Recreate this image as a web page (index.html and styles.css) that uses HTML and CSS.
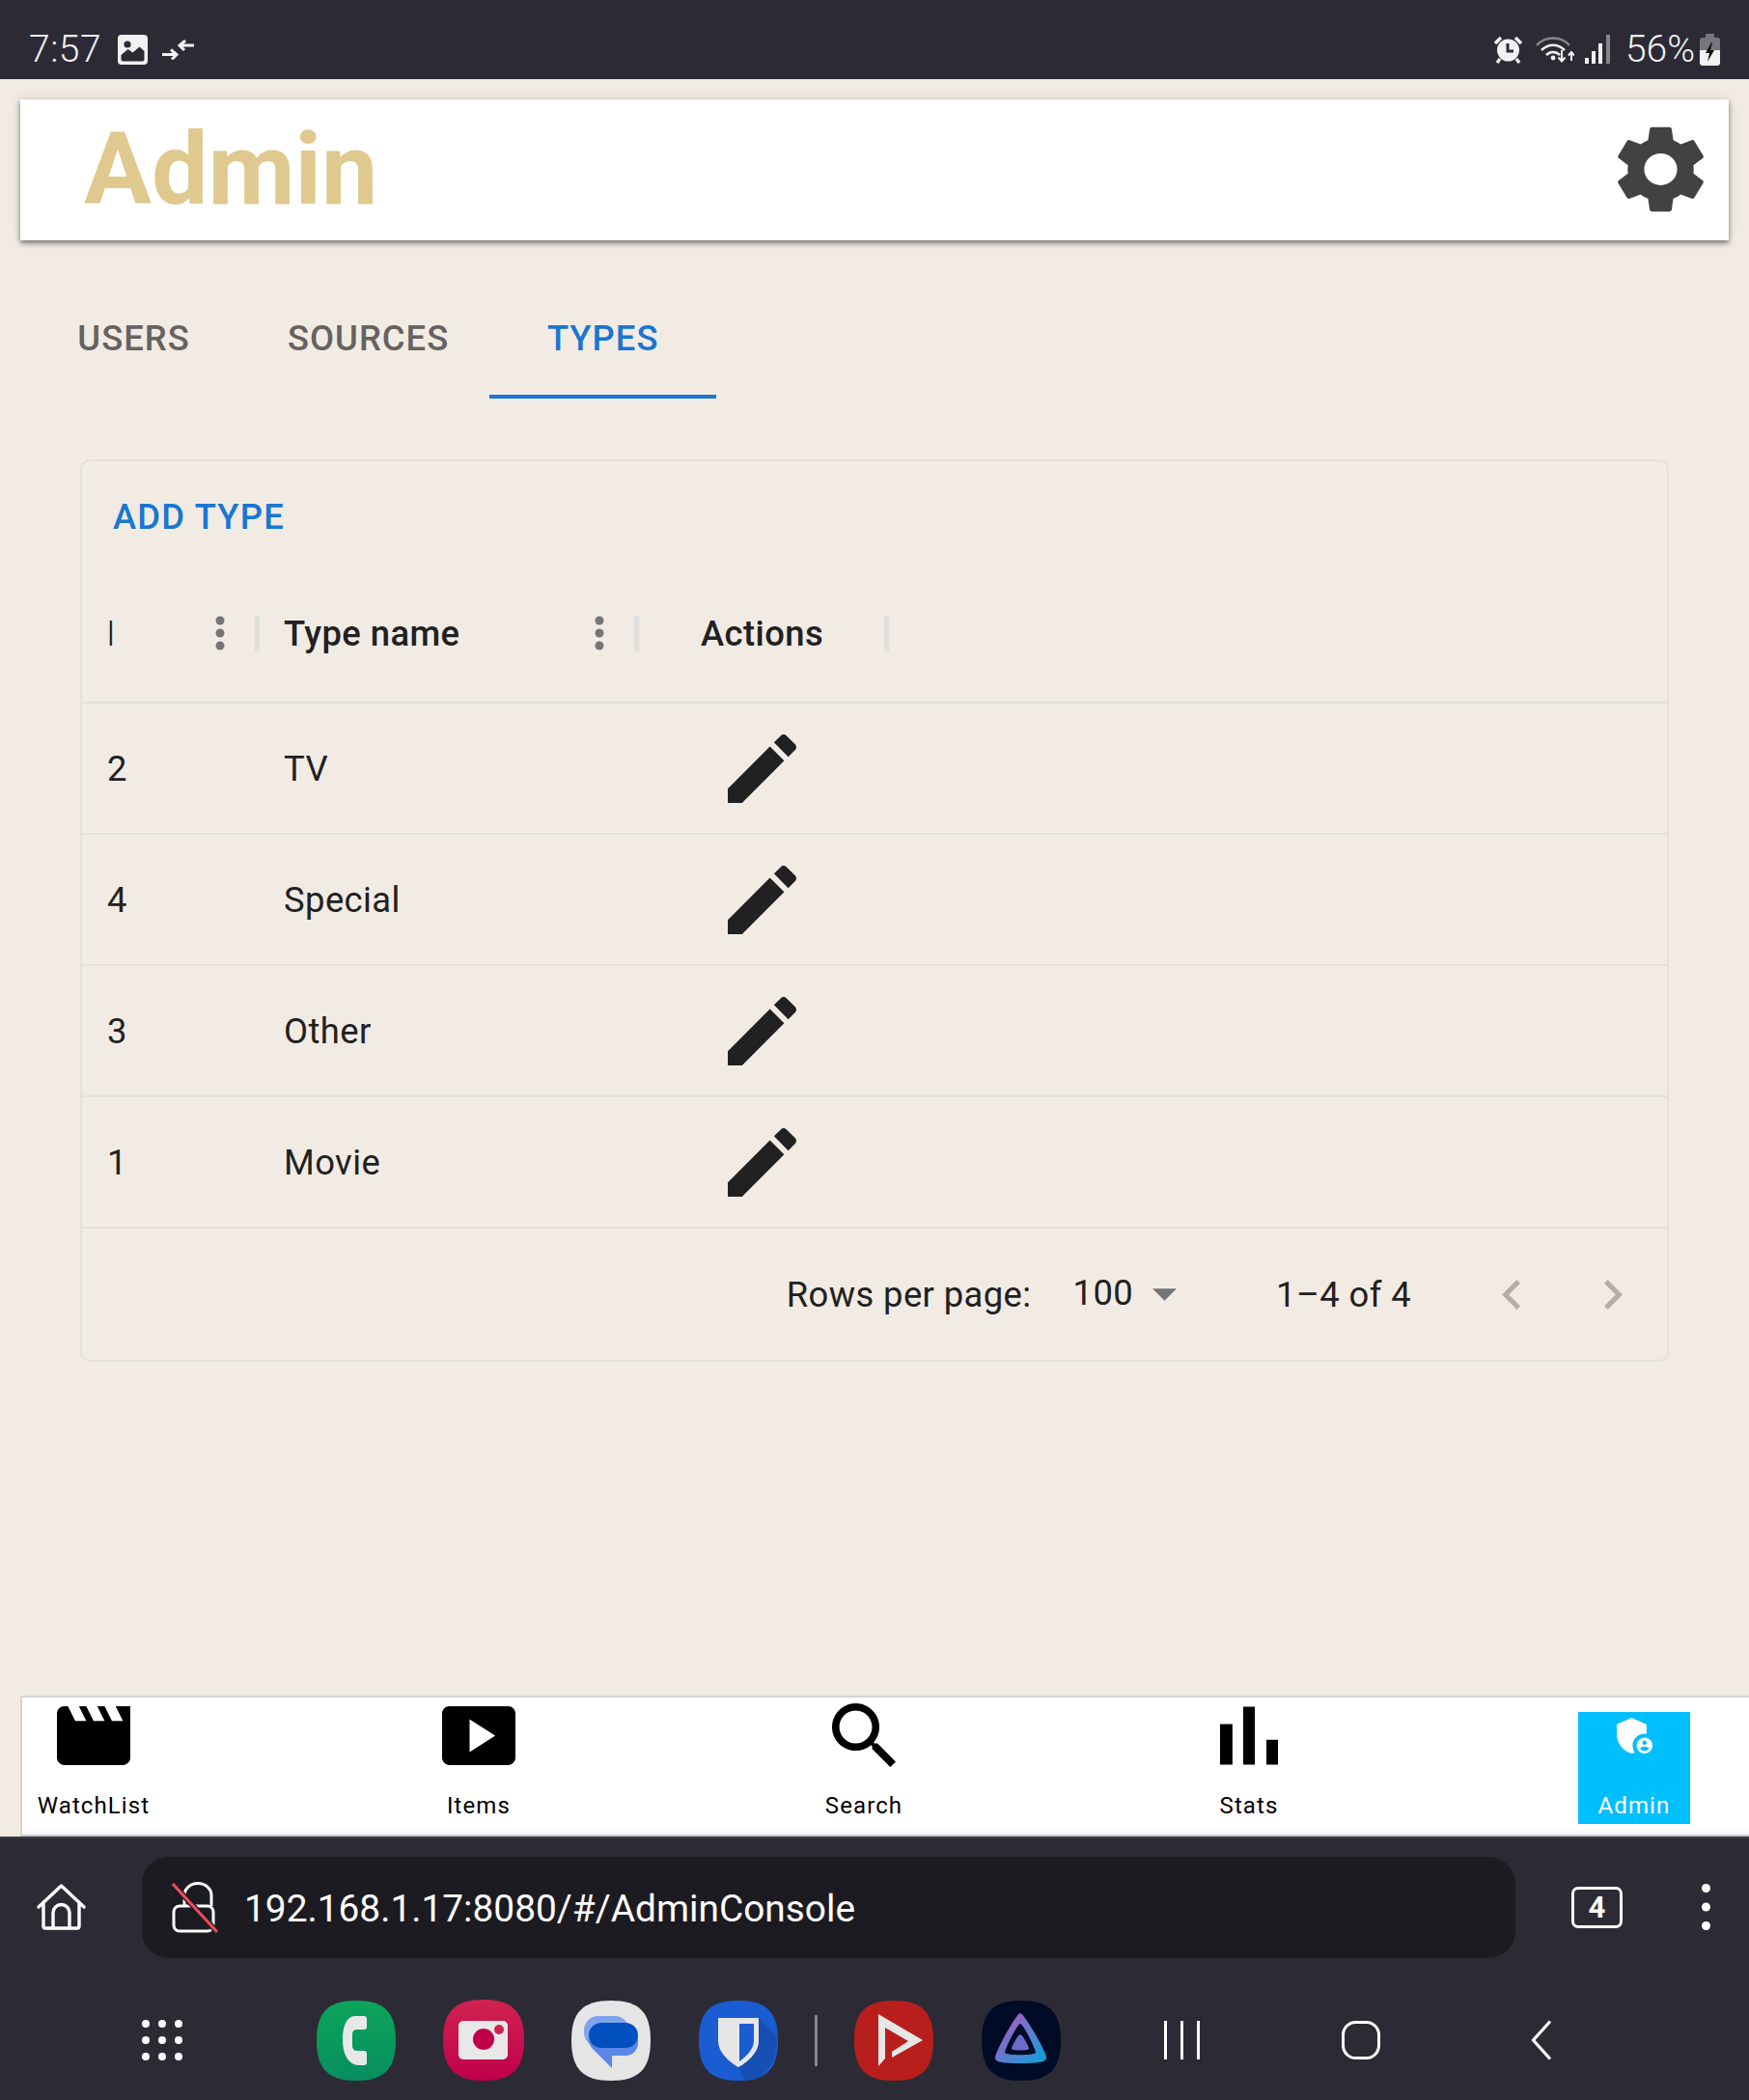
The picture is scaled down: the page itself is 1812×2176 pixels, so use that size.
FILE: index.html
```html
<!DOCTYPE html>
<html lang="en">
<head>
  <meta charset="UTF-8">
  <meta name="viewport" content="width=device-width, initial-scale=1.0">
  <title>Admin</title>
  <link rel="stylesheet" href="styles.css">
</head>
<body>
  <div class="status-bar">
    <span class="status-time">7:57</span>
    <svg class="st-image" viewBox="0 0 31 31"><rect width="31" height="31" rx="4" fill="#f1f1f1"/><circle cx="10" cy="10" r="3.6" fill="#2c2b35"/><path d="M3.5 21l7-6 5 3.5 7-6 5 4.5v8.5a2 2 0 0 1-2 2h-20a2 2 0 0 1-2-2z" fill="#2c2b35"/></svg>
    <svg class="st-arrows" viewBox="0 0 33 21"><path d="M0 15.5h14M9 10.5l6 5-5 5M33 6H19M24 1l-6 5 5 5" fill="none" stroke="#f1f1f1" stroke-width="3"/></svg>
    <svg class="st-alarm" viewBox="0 0 29 29"><circle cx="14.5" cy="15" r="11.5" fill="#f1f1f1"/><path d="M14 8v8h6" fill="none" stroke="#2c2b35" stroke-width="3"/><path d="M1 8l6-6M28 8l-6-6M6 24l-3 4M23 24l3 4" stroke="#f1f1f1" stroke-width="3.4"/></svg>
    <svg class="st-wifi" viewBox="0 0 40 30"><path d="M1 11C10 1 26 1 35 11" fill="none" stroke="#85848b" stroke-width="2.6"/><path d="M6 16C13 9 23 9 30 16M11 21c4-4 10-4 14 0" fill="none" stroke="#f1f1f1" stroke-width="2.6"/><circle cx="18" cy="24" r="2.4" fill="#f1f1f1"/><path d="M27 16v11M23.500 23.500l3.500 4 3.500-4M37 27v-9M33.800 21.500l3.200-3.500 3 3.500" fill="none" stroke="#f1f1f1" stroke-width="2"/></svg>
    <svg class="st-signal" viewBox="0 0 27 30"><rect x="0" y="24" width="4" height="6" fill="#f1f1f1"/><rect x="7" y="17" width="4" height="13" fill="#f1f1f1"/><rect x="14" y="9" width="4" height="21" fill="#f1f1f1"/><rect x="22" y="0" width="4" height="30" fill="#85848b"/></svg>
    <span class="status-battery">56%</span>
    <svg class="st-battery" viewBox="0 0 21 33"><path d="M6 0h9v4h3a3 3 0 0 1 3 3v10H0V7a3 3 0 0 1 3-3h3z" fill="#77767d"/><path d="M0 17h21v13a3 3 0 0 1-3 3H3a3 3 0 0 1-3-3z" fill="#f1f1f1"/><path d="M12 9l-6 11h4l-2 9 7-12h-4l2-8z" fill="#111"/></svg>
  </div>

  <div class="page">
    <div class="app-header">
      <h1 class="app-title">Admin</h1>
      <svg class="settings-icon" viewBox="2 2 20 20" preserveAspectRatio="none"><path d="M19.14 12.94c.04-.3.06-.61.06-.94 0-.32-.02-.64-.07-.94l2.03-1.58c.18-.14.23-.41.12-.61l-1.92-3.32c-.12-.22-.37-.29-.59-.22l-2.39.96c-.5-.38-1.03-.7-1.62-.94l-.36-2.54c-.04-.24-.24-.41-.48-.41h-3.84c-.24 0-.43.17-.47.41l-.36 2.54c-.59.24-1.13.57-1.62.94l-2.39-.96c-.22-.08-.47 0-.59.22L2.74 8.87c-.12.21-.08.47.12.61l2.03 1.58c-.05.3-.09.63-.09.94s.02.64.07.94l-2.03 1.58c-.18.14-.23.41-.12.61l1.92 3.32c.12.22.37.29.59.22l2.39-.96c.5.38 1.03.7 1.62.94l.36 2.54c.05.24.24.41.48.41h3.84c.24 0 .44-.17.47-.41l.36-2.54c.59-.24 1.13-.56 1.62-.94l2.39.96c.22.08.47 0 .59-.22l1.92-3.32c.12-.22.07-.47-.12-.61l-2.01-1.58zM12 15.6c-1.98 0-3.6-1.62-3.6-3.6s1.62-3.6 3.6-3.6 3.6 1.62 3.6 3.6-1.62 3.6-3.6 3.6z"/></svg>
    </div>

    <div class="tabs">
      <div class="tab">USERS</div>
      <div class="tab">SOURCES</div>
      <div class="tab tab-active">TYPES</div>
    </div>

    <div class="card">
      <div class="toolbar"><span class="add-btn">ADD TYPE</span></div>

      <div class="grid-row grid-head">
        <div class="cell head-cell">
          <span class="head-id">I</span>
          <svg class="kebab" viewBox="0 0 10 36"><circle cx="5" cy="5" r="4.500"/><circle cx="5" cy="18" r="4.500"/><circle cx="5" cy="31" r="4.500"/></svg>
          <span class="col-sep"></span>
        </div>
        <div class="cell head-cell">
          <span class="head-label">Type name</span>
          <svg class="kebab" viewBox="0 0 10 36"><circle cx="5" cy="5" r="4.500"/><circle cx="5" cy="18" r="4.500"/><circle cx="5" cy="31" r="4.500"/></svg>
          <span class="col-sep"></span>
        </div>
        <div class="cell head-cell head-actions">
          <span class="head-label">Actions</span>
          <span class="col-sep"></span>
        </div>
      </div>

      <div class="grid-row">
        <div class="cell cell-id">2</div>
        <div class="cell cell-name">TV</div>
        <div class="cell cell-action"><svg class="edit-icon" viewBox="3 3 18 18"><path d="M3 17.25V21h3.750L17.810 9.940l-3.750-3.750L3 17.250zM20.710 7.040c.39-.39.39-1.020 0-1.410l-2.340-2.340c-.39-.39-1.020-.39-1.410 0l-1.830 1.830 3.750 3.750 1.830-1.830z"/></svg></div>
      </div>
      <div class="grid-row">
        <div class="cell cell-id">4</div>
        <div class="cell cell-name">Special</div>
        <div class="cell cell-action"><svg class="edit-icon" viewBox="3 3 18 18"><path d="M3 17.25V21h3.750L17.810 9.940l-3.750-3.750L3 17.250zM20.710 7.040c.39-.39.39-1.020 0-1.410l-2.340-2.340c-.39-.39-1.020-.39-1.410 0l-1.830 1.830 3.750 3.750 1.830-1.830z"/></svg></div>
      </div>
      <div class="grid-row">
        <div class="cell cell-id">3</div>
        <div class="cell cell-name">Other</div>
        <div class="cell cell-action"><svg class="edit-icon" viewBox="3 3 18 18"><path d="M3 17.25V21h3.750L17.810 9.940l-3.750-3.750L3 17.250zM20.710 7.040c.39-.39.39-1.020 0-1.410l-2.340-2.340c-.39-.39-1.020-.39-1.410 0l-1.830 1.830 3.750 3.750 1.830-1.830z"/></svg></div>
      </div>
      <div class="grid-row">
        <div class="cell cell-id">1</div>
        <div class="cell cell-name">Movie</div>
        <div class="cell cell-action"><svg class="edit-icon" viewBox="3 3 18 18"><path d="M3 17.25V21h3.750L17.810 9.940l-3.750-3.750L3 17.250zM20.710 7.040c.39-.39.39-1.020 0-1.410l-2.340-2.340c-.39-.39-1.020-.39-1.410 0l-1.830 1.830 3.750 3.750 1.830-1.830z"/></svg></div>
      </div>

      <div class="pagination">
        <span>Rows per page:</span>
        <span class="page-size">100</span>
        <svg class="size-arrow" viewBox="7 10 10 5"><path d="M7 10l5 5 5-5z"/></svg>
        <span class="page-range">1–4 of 4</span>
        <svg class="page-prev" viewBox="8 6 7.410 12"><path d="M15.410 7.410 14 6l-6 6 6 6 1.410-1.410L10.830 12z"/></svg>
        <svg class="page-next" viewBox="8.590 6 7.410 12"><path d="M10 6 8.590 7.410 13.170 12l-4.580 4.590L10 18l6-6z"/></svg>
      </div>
    </div>
  </div>

  <div class="bottom-nav">
    <div class="nav-item">
      <svg class="nav-icon" width="76" height="61" viewBox="2 4 20 16"><path d="M18 4l2 4h-3l-2-4h-2l2 4h-3l-2-4H8l2 4H7L5 4H4c-1.100 0-1.990.9-1.990 2L2 18c0 1.100.9 2 2 2h16c1.100 0 2-.9 2-2V4h-4z"/></svg>
      <span class="nav-label">WatchList</span>
    </div>
    <div class="nav-item">
      <svg class="nav-icon" width="76" height="61" viewBox="2 4 20 16"><path d="M20 4H4c-1.100 0-2 .9-2 2v12c0 1.100.9 2 2 2h16c1.100 0 2-.9 2-2V6c0-1.100-.9-2-2-2zM9.500 16.500v-9l7 4.500-7 4.500z"/></svg>
      <span class="nav-label">Items</span>
    </div>
    <div class="nav-item nav-search">
      <svg class="nav-icon" width="66" height="66" viewBox="3 3 17.490 17.490"><path d="M15.500 14h-.79l-.28-.27C15.410 12.590 16 11.110 16 9.500 16 5.910 13.090 3 9.500 3S3 5.910 3 9.500 5.910 16 9.500 16c1.610 0 3.090-.59 4.230-1.570l.27.28v.79l5 4.990L20.490 19l-4.990-5zm-6 0C7.010 14 5 11.990 5 9.500S7.010 5 9.500 5 14 7.010 14 9.500 11.990 14 9.500 14z"/></svg>
      <span class="nav-label">Search</span>
    </div>
    <div class="nav-item">
      <svg class="nav-icon" width="60" height="61" viewBox="5 5 14 14"><path d="M5 9.200h3V19H5zM10.600 5h2.800v14h-2.800zm5.600 8H19v6h-2.800z"/></svg>
      <span class="nav-label">Stats</span>
    </div>
    <div class="nav-item nav-active">
      <svg class="nav-shield" width="39" height="37" viewBox="3 3 18 18"><path d="M17 11c.34 0 .67.04 1 .09V6.270L10.500 3 3 6.270v4.910c0 4.540 3.200 8.790 7.500 9.820.55-.13 1.080-.32 1.600-.55-.69-.98-1.100-2.170-1.100-3.450 0-3.310 2.690-6 6-6z"/><path d="M17 13c-2.210 0-4 1.790-4 4s1.790 4 4 4 4-1.790 4-4-1.790-4-4-4zm0 1.380c.62 0 1.120.51 1.120 1.120s-.51 1.120-1.120 1.120-1.120-.51-1.120-1.120.5-1.120 1.120-1.120zm0 5.370c-.93 0-1.740-.46-2.240-1.170.05-.72 1.510-1.080 2.240-1.080s2.190.36 2.240 1.080c-.5.71-1.310 1.170-2.240 1.170z"/></svg>
      <span class="nav-label">Admin</span>
    </div>
  </div>

  <div class="browser-bar">
    <div class="url-row">
      <svg class="home-icon" viewBox="0 0 51 48"><path d="M2 24L25.500 2 49 24M7 20v24a2 2 0 0 0 2 2h33a2 2 0 0 0 2-2V20M17 46V30a8.500 8.500 0 0 1 17 0v16" fill="none" stroke="#fff" stroke-width="3.400" stroke-linejoin="round" stroke-linecap="round"/></svg>
      <div class="url-box">
        <svg class="lock-icon" viewBox="0 0 48 53"><rect x="2" y="25" width="41" height="26" rx="6" fill="none" stroke="#fff" stroke-width="3"/><path d="M13 25V14a14 12.500 0 0 1 28 0v11" fill="none" stroke="#fff" stroke-width="3"/><path d="M1 2l46 50" stroke="#1c1b21" stroke-width="6"/><path d="M1 2l46 50" stroke="#ef4a5a" stroke-width="3"/></svg>
        <span class="url-text">192.168.1.17:8080/#/AdminConsole</span>
      </div>
      <div class="tab-count">4</div>
      <svg class="menu-icon" viewBox="0 0 9 48"><circle cx="4.500" cy="4.500" r="4.500"/><circle cx="4.500" cy="24" r="4.500"/><circle cx="4.500" cy="43.500" r="4.500"/></svg>
    </div>

    <div class="dock-row">
      <svg class="apps-icon" viewBox="0 0 42 42"><circle cx="4" cy="4" r="4"/><circle cx="21" cy="4" r="4"/><circle cx="38" cy="4" r="4"/><circle cx="4" cy="21" r="4"/><circle cx="21" cy="21" r="4"/><circle cx="38" cy="21" r="4"/><circle cx="4" cy="38" r="4"/><circle cx="21" cy="38" r="4"/><circle cx="38" cy="38" r="4"/></svg>

      <svg class="app-icon app-phone" viewBox="0 0 82 83">
        <defs><linearGradient id="green" x1="0" y1="0" x2="0" y2="1"><stop offset="0" stop-color="#0ca45a"/><stop offset="1" stop-color="#078e60"/></linearGradient></defs>
        <path d="M41 0C70 0 82 12 82 41 82 71 70 83 41 83 12 83 0 71 0 41 0 12 12 0 41 0z" fill="url(#green)"/>
        <path d="M40 16H49Q52 16 52 19V27Q52 30 49 30H42Q37 30 37 35V47Q37 52 42 52H49Q52 52 52 55V64Q52 67 49 67H44C33 67 27 55 27 41 27 27 31 16 40 16z" fill="#e8e8e8"/>
      </svg>
      <svg class="app-icon app-camera" viewBox="0 0 84 84">
        <defs><linearGradient id="pink" x1="0" y1="0" x2="0" y2="1"><stop offset="0" stop-color="#d0234f"/><stop offset="1" stop-color="#bf004b"/></linearGradient></defs>
        <path d="M42 0C71 0 84 12 84 42 84 72 71 84 42 84 13 84 0 72 0 42 0 12 13 0 42 0z" fill="url(#pink)"/>
        <rect x="16" y="22" width="51" height="40" rx="5" fill="#e8e8e8"/>
        <circle cx="42" cy="41" r="11" fill="#bf004b"/>
        <circle cx="58" cy="31" r="5" fill="#d0234f"/>
      </svg>
      <svg class="app-icon app-messages" viewBox="0 0 82 83">
        <path d="M41 0C70 0 82 12 82 41 82 71 70 83 41 83 12 83 0 71 0 41 0 12 12 0 41 0z" fill="#e5e5e5"/>
        <rect x="13" y="16" width="47" height="32" rx="15" fill="#7fa3ee"/>
        <path d="M18 40H69V44A13 13 0 0 1 56 57H42V70L22 50A14 14 0 0 1 18 40z" fill="#5a86e6"/>
        <rect x="18" y="23" width="51" height="26" rx="13" fill="#0050bf"/>
      </svg>
      <svg class="app-icon app-bitwarden" viewBox="0 0 82 83">
        <path d="M41 0C70 0 82 12 82 41 82 71 70 83 41 83 12 83 0 71 0 41 0 12 12 0 41 0z" fill="#1a5dd2"/>
        <path d="M62 18L81 37C82 60 72 82 48 83L41 69 62 42z" fill="#1750b5"/>
        <path d="M20 18H62V42C62 54 50 64 41 69 32 64 20 54 20 42z" fill="#e6e6e6"/>
        <path d="M42 24H57V42C57 50 49 58 42 63z" fill="#1a5dd2"/>
      </svg>
      <span class="dock-divider"></span>
      <svg class="app-icon app-newpipe" viewBox="0 0 82 83">
        <path d="M41 0C70 0 82 12 82 41 82 71 70 83 41 83 12 83 0 71 0 41 0 12 12 0 41 0z" fill="#b81f1c"/>
        <path d="M25 14L71 41 39 59V53L56 42 32 28V60L25 68z" fill="#e6e6e6"/>
      </svg>
      <svg class="app-icon app-jellyfin" viewBox="0 0 82 83">
        <defs><linearGradient id="jelly" x1="0.2" y1="0.15" x2="0.95" y2="0.9"><stop offset="0" stop-color="#a25cc6"/><stop offset="1" stop-color="#10a0d8"/></linearGradient></defs>
        <path d="M41 0C70 0 82 12 82 41 82 71 70 83 41 83 12 83 0 71 0 41 0 12 12 0 41 0z" fill="#020b26"/>
        <path d="M40 13C44 13 65 50 67 58 68 63 62 65 40 65 18 65 13 63 14 58 16 50 36 13 40 13z" fill="url(#jelly)"/>
        <path d="M40 24C43 24 56 50 56 54 55 57 25 57 24 54 24 50 37 24 40 24z" fill="#020b26"/>
        <path d="M40 35C42 35 49 47 49 50 48 52 32 52 31 50 31 47 38 35 40 35z" fill="#6a6ccc"/>
      </svg>

      <svg class="sys-recents" viewBox="0 0 37 40"><path d="M1.500 0v40M18.500 0v40M35.500 0v40" stroke="#fff" stroke-width="3"/></svg>
      <svg class="sys-home" viewBox="0 0 40 40"><rect x="1.500" y="1.500" width="37" height="37" rx="13" fill="none" stroke="#fff" stroke-width="3"/></svg>
      <svg class="sys-back" viewBox="0 0 22 42"><path d="M20 1.500L2.500 21 20 40.500" fill="none" stroke="#fff" stroke-width="3.200"/></svg>
    </div>
  </div>
</body>
</html>
```

FILE: styles.css
```css
:root {
  --bg-page: #f2ebe4;
  --bg-dark: #2c2b35;
  --bg-url: #1c1b21;
  --line: #e2e1dc;
  --text: #212121;
  --blue: #1976d2;
}

* {
  box-sizing: border-box;
}

body {
  margin: 0;
  width: 1812px;
  height: 2176px;
  display: flex;
  flex-direction: column;
  overflow: hidden;
  font-family: Roboto, 'Liberation Sans', sans-serif;
  color: var(--text);
  background-color: var(--bg-page);
}

svg {
  display: block;
  flex: none;
}

/* phone status bar */
.status-bar {
  height: 82px;
  padding: 20px 30px 0 30px;
  display: flex;
  align-items: center;
  background-color: var(--bg-dark);
  color: #f1f1f1;
}

.status-time {
  font-size: 39px;
  font-weight: 300;
  line-height: 1;
  letter-spacing: 0.5px;
}

.st-image {
  width: 31px;
  height: 31px;
  margin-left: 17px;
}

.st-arrows {
  width: 33px;
  height: 21px;
  margin-left: 15px;
}

.st-alarm {
  width: 29px;
  height: 29px;
  margin-left: auto;
}

.st-wifi {
  width: 40px;
  height: 30px;
  margin-left: 14px;
}

.st-signal {
  width: 27px;
  height: 30px;
  margin-left: 11px;
}

.status-battery {
  margin-left: 15px;
  font-size: 39px;
  font-weight: 300;
  line-height: 1;
}

.st-battery {
  width: 21px;
  height: 33px;
  margin-left: 5px;
}

/* page */
.page {
  flex: 1;
  padding: 21px 21px 0 21px;
}

.app-header {
  height: 146px;
  padding: 0 23px 0 66px;
  display: flex;
  align-items: center;
  justify-content: space-between;
  background-color: white;
  box-shadow: 0 3px 5px rgba(0, 0, 0, 0.45), 0 0 12px rgba(0, 0, 0, 0.12);
}

.app-title {
  margin: 0;
  font-size: 104px;
  font-weight: 700;
  line-height: 1;
  color: #dfc98e;
}

.settings-icon {
  width: 95px;
  height: 91px;
  margin-bottom: 2px;
  fill: #424242;
}

.tabs {
  display: flex;
  margin-top: 39px;
}

.tab {
  min-width: 235px;
  height: 125px;
  padding: 0 42px;
  display: flex;
  align-items: center;
  justify-content: center;
  font-size: 36.4px;
  font-weight: 500;
  letter-spacing: 1px;
  color: #666260;
  border-bottom: 4px solid transparent;
  border-top: 4px solid transparent;
}

.tab-active {
  color: var(--blue);
  border-bottom-color: var(--blue);
}

/* data grid card */
.card {
  margin: 63px 62px 0 62px;
  height: 935px;
  border: 2px solid var(--line);
  border-radius: 10px;
}

.toolbar {
  height: 114px;
  padding: 0 0 0 32px;
  display: flex;
  align-items: center;
}

.add-btn {
  font-size: 36.4px;
  font-weight: 500;
  letter-spacing: 1.2px;
  color: var(--blue);
}

.grid-row {
  height: 136px;
  display: grid;
  grid-template-columns: 184px 393px 259px;
  border-bottom: 2px solid var(--line);
  font-size: 36.4px;
  letter-spacing: 0.42px;
}

.grid-head {
  height: 137px;
  padding-bottom: 7px;
  font-weight: 500;
}

.cell {
  display: flex;
  align-items: center;
}

.cell-id {
  padding-left: 26px;
}

.cell-name {
  padding-left: 25px;
}

.cell-action {
  justify-content: center;
  padding-right: 4px;
}

.edit-icon {
  width: 71px;
  height: 71px;
  fill: #212121;
}

.head-cell {
  padding-left: 25px;
}

.head-id {
  font-weight: 300;
}

.head-actions {
  padding-left: 64px;
}

.kebab {
  width: 10px;
  height: 36px;
  margin-left: auto;
  fill: #757575;
}

.col-sep {
  width: 5px;
  height: 37px;
  margin-left: 31px;
  background-color: #e0dfdb;
}

.head-actions .col-sep {
  margin-left: auto;
}

.pagination {
  height: 136px;
  padding-right: 46px;
  display: flex;
  align-items: center;
  justify-content: flex-end;
  font-size: 36.4px;
  letter-spacing: 0.4px;
}

.page-size {
  margin-left: 43px;
  margin-bottom: 4px;
}

.size-arrow {
  width: 25px;
  height: 13px;
  margin-left: 20px;
  fill: #757575;
}

.page-range {
  margin-left: 103px;
}

.page-prev,
.page-next {
  width: 19px;
  height: 31px;
  fill: rgba(0, 0, 0, 0.26);
}

.page-prev {
  margin-left: 94px;
}

.page-next {
  margin-left: 87px;
}

/* app bottom navigation */
.bottom-nav {
  height: 146px;
  margin-left: 21px;
  padding-left: 16px;
  display: flex;
  align-items: flex-start;
  gap: 283px;
  background: linear-gradient(#fff 92%, #f8f8f8);
  border-top: 2px solid #d4d4d2;
  border-left: 2px solid #d4d4d2;
  border-bottom: 2px solid #c8c8c8;
  color: black;
}

.nav-item {
  flex: none;
  width: 116px;
  height: 125px;
  padding-top: 9px;
  display: flex;
  flex-direction: column;
  align-items: center;
}

.nav-icon {
  fill: black;
}

.nav-search {
  padding-top: 6px;
}

.nav-label {
  margin-top: 28px;
  font-size: 24px;
  line-height: 28px;
  letter-spacing: 1.1px;
  white-space: nowrap;
}

.nav-search .nav-label {
  margin-top: 26px;
}

.nav-active {
  height: 116px;
  margin-top: 15px;
  padding-top: 6px;
  background-color: #00bfff;
  color: white;
}

.nav-shield {
  fill: white;
}

.nav-active .nav-label {
  margin-top: 40px;
}

/* browser toolbar and launcher */
.browser-bar {
  height: 273px;
  background-color: var(--bg-dark);
  border-top: 2px solid #3a3a42;
}

.url-row {
  height: 166px;
  padding: 0 0 24px 38px;
  display: flex;
  align-items: center;
}

.home-icon {
  width: 51px;
  height: 48px;
}

.url-box {
  width: 1423px;
  height: 105px;
  margin-left: 58px;
  padding-left: 31px;
  display: flex;
  align-items: center;
  border-radius: 28px;
  background-color: var(--bg-url);
}

.lock-icon {
  width: 48px;
  height: 53px;
}

.url-text {
  margin-left: 27px;
  padding-top: 2px;
  font-size: 38.85px;
  color: white;
}

.tab-count {
  width: 53px;
  height: 43px;
  margin-left: 58px;
  display: flex;
  align-items: center;
  justify-content: center;
  border: 3px solid white;
  border-radius: 7px;
  font-size: 31px;
  font-weight: 700;
  color: white;
}

.menu-icon {
  width: 9px;
  height: 48px;
  margin-left: 82px;
  fill: white;
}

.dock-row {
  height: 86px;
  padding-left: 147px;
  display: flex;
  align-items: center;
}

.apps-icon {
  width: 42px;
  height: 42px;
  fill: white;
}

.app-icon {
  width: 82px;
  height: 83px;
}

.app-phone {
  margin-left: 139px;
}

.app-camera {
  width: 84px;
  height: 84px;
  margin-left: 49px;
}

.app-messages {
  margin-left: 49px;
}

.app-bitwarden {
  margin-left: 50px;
}

.dock-divider {
  width: 3px;
  height: 53px;
  margin-left: 38px;
  background-color: #85848b;
}

.app-newpipe {
  margin-left: 38px;
}

.app-jellyfin {
  margin-left: 50px;
}

.sys-recents {
  width: 37px;
  height: 40px;
  margin-left: 107px;
}

.sys-home {
  width: 40px;
  height: 40px;
  margin-left: 147px;
}

.sys-back {
  width: 22px;
  height: 42px;
  margin-left: 156px;
}
```
